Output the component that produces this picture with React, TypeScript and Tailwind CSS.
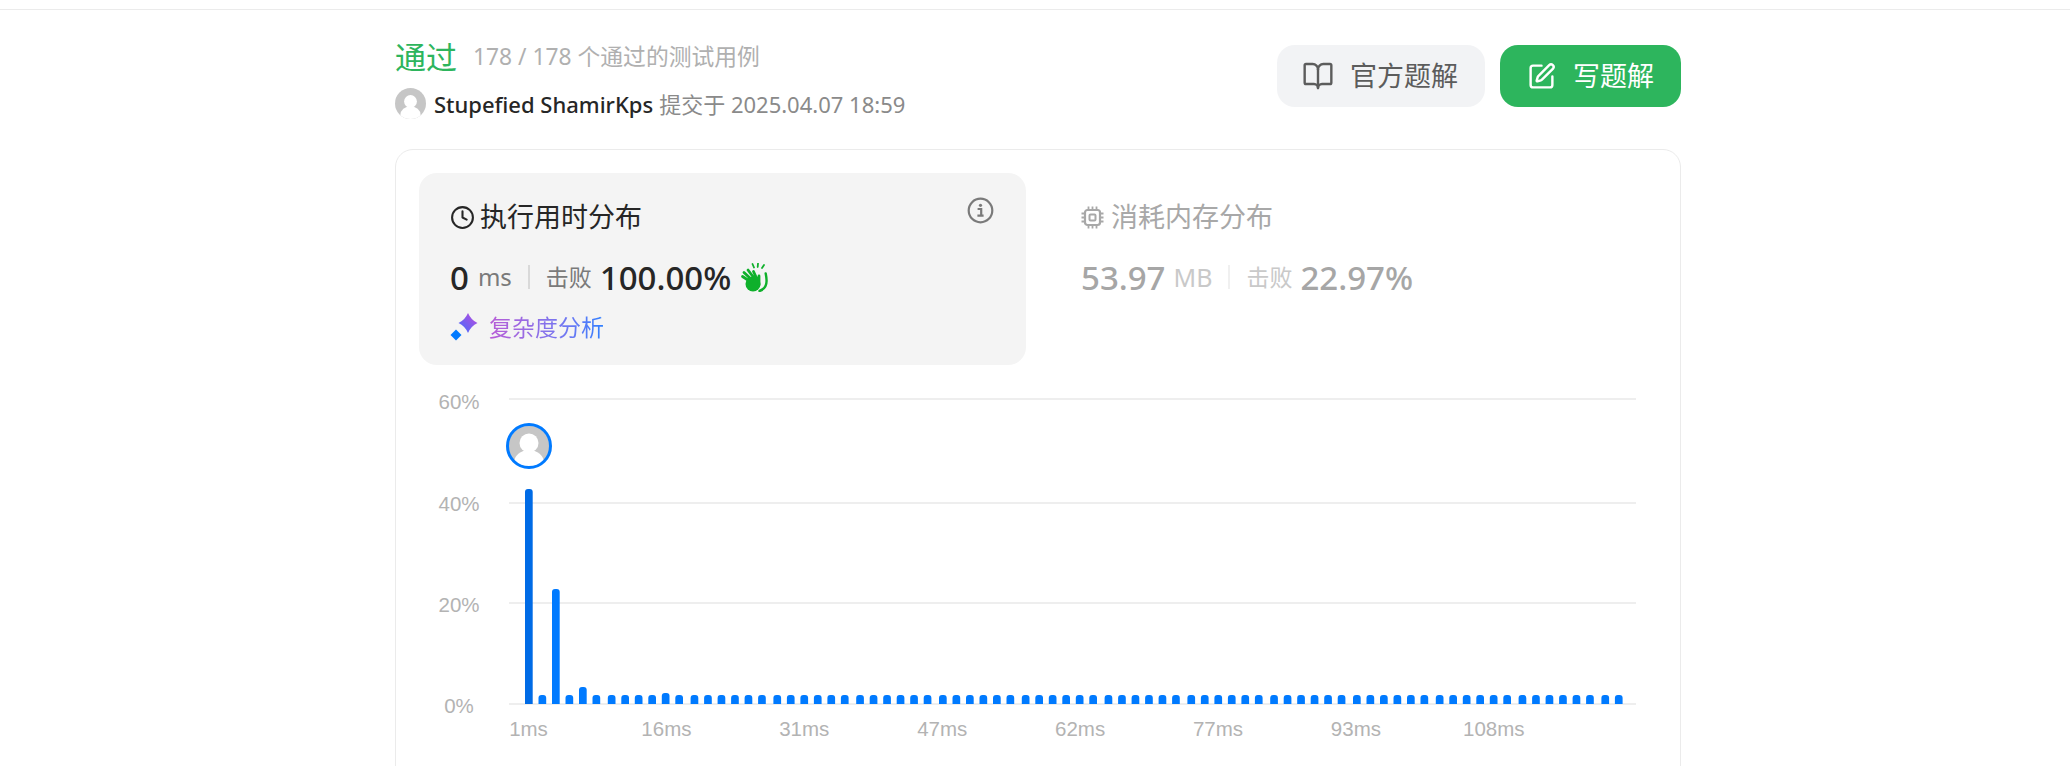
import { BookOpen, Clock, SquarePen } from "lucide-react";

const FONT = "font-['Noto_Sans','Noto_Sans_CJK_SC',sans-serif]";

// bar heights that differ from the default stub
const TALL: Record<number, number> = { 0: 215, 2: 115, 4: 17, 10: 11 };
const BAR_COUNT = 80;
const BASE_Y = 318;
const GRID_X1 = 113;
const GRID_X2 = 1240;

function barX(i: number) {
  // pitch is 13.5 with a slightly wider gap after each sixth bar
  return 129 + i * 13.5 + Math.floor(i / 6) * 1.8;
}

function barPath(x: number, h: number) {
  const w = 7.7;
  const r = 3;
  const top = BASE_Y - h;
  return `M${x} ${BASE_Y}V${top + r}A${r} ${r} 0 0 1 ${x + r} ${top}H${x + w - r}A${r} ${r} 0 0 1 ${x + w} ${top + r}V${BASE_Y}Z`;
}

function Avatar({ size, ring }: { size: number; ring?: boolean }) {
  const id = ring ? "av-ring" : "av-small";
  const r = ring ? 20.5 : 23;
  return (
    <svg width={size} height={size} viewBox="0 0 46 46" className="shrink-0">
      <defs>
        <clipPath id={id}>
          <circle cx="23" cy="23" r={r} />
        </clipPath>
      </defs>
      <circle cx="23" cy="23" r={r} fill="#c6c6c6" />
      <g clipPath={`url(#${id})`}>
        <circle cx="23" cy="20" r="9.5" fill="#fff" />
        <ellipse cx="23" cy="40" rx="15" ry="13" fill="#fff" />
      </g>
      {ring && <circle cx="23" cy="23" r="21.5" fill="none" stroke="#007aff" strokeWidth="3" />}
    </svg>
  );
}

function InfoIcon() {
  return (
    <svg width="27" height="27" viewBox="0 0 27 27" fill="none" className="shrink-0">
      <circle cx="13.5" cy="13.5" r="11.8" stroke="#7a7a7a" strokeWidth="2.2" />
      <circle cx="13.5" cy="8.3" r="1.6" fill="#7a7a7a" />
      <path d="M10.6 12h3.6v6.4M10.4 18.6h6.2" stroke="#7a7a7a" strokeWidth="2.2" />
    </svg>
  );
}

function ChipIcon() {
  return (
    <svg width="23" height="23" viewBox="0 0 23 23" fill="none" className="shrink-0">
      <rect x="4" y="4" width="15" height="15" rx="2.5" stroke="#a8a8a8" strokeWidth="2.2" />
      <rect x="8.5" y="8.5" width="6" height="6" rx="1" stroke="#a8a8a8" strokeWidth="2" />
      <path
        d="M7.5 0.5v3M11.5 0.5v3M15.5 0.5v3M7.5 19.5v3M11.5 19.5v3M15.5 19.5v3M0.5 7.5h3M0.5 11.5h3M0.5 15.5h3M19.5 7.5h3M19.5 11.5h3M19.5 15.5h3"
        stroke="#a8a8a8"
        strokeWidth="1.8"
      />
    </svg>
  );
}

function ClapIcon() {
  return (
    <svg width="28" height="29" viewBox="0 0 28 29" fill="none" className="shrink-0">
      <circle cx="13" cy="21" r="7.5" fill="#0fb02b" />
      <path
        d="M11 19L2.500 13.500M12 17L4 9.500M14 15L8 7M16.500 15L13.500 8.500M19 22V13"
        stroke="#0fb02b"
        strokeWidth="2.800"
        strokeLinecap="round"
      />
      <path d="M19.500 28c4.500-1.500 7.500-5.500 7-11.500-.1-2-.3-3.500-.8-6" stroke="#0fb02b" strokeWidth="2.400" strokeLinecap="round" />
      <path d="M12.500 1l1.500 3.500M18 .5l-.3 3.500M24 2l-2 3" stroke="#0fb02b" strokeWidth="1.800" strokeLinecap="round" />
    </svg>
  );
}

function SparkIcon() {
  return (
    <svg width="28" height="28" viewBox="0 0 28 28" className="shrink-0">
      <defs>
        <linearGradient id="spark" x1="0" y1="1" x2="1" y2="0">
          <stop offset="0" stopColor="#3f6fff" />
          <stop offset="0.7" stopColor="#9a55e6" />
          <stop offset="1" stopColor="#c055d8" />
        </linearGradient>
      </defs>
      <path d="M18 0Q21 7 27.5 10Q21 13 18 20Q15 13 8.5 10Q15 7 18 0z" fill="url(#spark)" />
      <path d="M6 16.500l5.500 5.500L6 27.500.5 22z" fill="#007aff" />
    </svg>
  );
}

function Chart() {
  const yLabels = [
    ["60%", 23],
    ["40%", 125],
    ["20%", 226],
    ["0%", 327],
  ] as const;
  const gridY = [13, 117, 217, 318];
  const xLabels = ["1ms", "16ms", "31ms", "47ms", "62ms", "77ms", "93ms", "108ms"];

  return (
    <svg width="1284" height="370" viewBox="0 0 1284 370" className="block font-['Liberation_Sans',sans-serif]">
      {gridY.map((y) => (
        <line key={y} x1={GRID_X1} x2={GRID_X2} y1={y} y2={y} stroke="#eeeeee" strokeWidth="2" />
      ))}
      {yLabels.map(([t, y]) => (
        <text key={t} x="63" y={y} textAnchor="middle" fontSize="20.5" fill="#b3b3b3">
          {t}
        </text>
      ))}
      {xLabels.map((t, i) => (
        <text key={t} x={132.5 + i * 137.9} y="350" textAnchor="middle" fontSize="20.5" fill="#b3b3b3">
          {t}
        </text>
      ))}
      {Array.from({ length: BAR_COUNT }, (_, i) => (
        <path key={i} d={barPath(barX(i), TALL[i] ?? 9)} fill={i === 0 ? "#006be6" : "#007aff"} />
      ))}
      <g transform="translate(110 37)">
        <Avatar size={46} ring />
      </g>
    </svg>
  );
}

export default function App() {
  return (
    <div className={`h-[766px] w-full overflow-hidden bg-white ${FONT}`}>
      <div className="h-[10px] border-b border-[#ebebeb]" />
      <div className="ml-[395px] w-[1286px]">
        <div className="flex h-[139px] items-start justify-between pt-[25px]">
          <div>
            <div className="flex h-[44px] items-center">
              <span className="text-[31px] leading-none text-[#2db55d]">通过</span>
              <span className="ml-4 text-[22.8px] leading-none text-[#b0b0b0]">178 / 178 个通过的测试用例</span>
            </div>
            <div className="mt-[9px] flex items-center">
              <Avatar size={31} />
              <span className="ml-2 text-[22px] leading-none font-medium text-[#262626]">Stupefied ShamirKps</span>
              <span className="ml-[6px] text-[22px] leading-none text-[#8a8a8a]">提交于 2025.04.07 18:59</span>
            </div>
          </div>
          <div className="mt-[10px] flex gap-[15px] text-[27px]">
            <button className="flex h-[62px] w-[208px] items-center justify-center gap-[16px] rounded-[18px] bg-[#f2f3f5] pr-[2px] text-[#5c5c5c]">
              <BookOpen size={32} strokeWidth={1.8} />
              官方题解
            </button>
            <button className="flex h-[62px] w-[181px] items-center justify-center gap-[17px] rounded-[18px] bg-[#2db55d] text-white">
              <SquarePen size={29} strokeWidth={2} />
              写题解
            </button>
          </div>
        </div>

        <div className="h-[640px] rounded-[18px] border border-[#ebebeb] p-[23px]">
          <div className="flex gap-6">
            <div className="h-[192px] w-[607px] rounded-[18px] bg-[#f4f4f4] pt-[24px] pr-[32px] pl-[31px]">
              <div className="flex items-start justify-between">
                <div className="mt-[4px] flex items-center gap-[5px] text-[27px] leading-[32px] text-[#262626]">
                  <Clock size={25} strokeWidth={2} />
                  执行用时分布
                </div>
                <InfoIcon />
              </div>
              <div className="mt-[26px] flex h-[36px] items-center">
                <span className="text-[33px] leading-none font-medium text-[#262626]">0</span>
                <span className="ml-[9px] text-[24px] leading-none text-[#7a7a7a]">ms</span>
                <div className="mx-[16px] h-[24px] w-[2px] bg-[#d9d9d9]" />
                <span className="text-[23px] leading-none text-[#7a7a7a]">击败</span>
                <span className="ml-[8px] text-[33px] leading-none font-medium text-[#262626]">100.00%</span>
                <span className="ml-[9px]">
                  <ClapIcon />
                </span>
              </div>
              <div className="mt-[18px] flex items-center gap-[11px]">
                <SparkIcon />
                <span className="bg-gradient-to-r from-[#b85bd6] to-[#2b80ff] bg-clip-text text-[23px] leading-none text-transparent">
                  复杂度分析
                </span>
              </div>
            </div>
            <div className="pt-[24px] pl-[31px]">
              <div className="mt-[4px] flex items-center gap-[7px] text-[27px] leading-[32px] text-[#a8a8a8]">
                <ChipIcon />
                消耗内存分布
              </div>
              <div className="mt-[26px] flex h-[36px] items-center">
                <span className="text-[33px] leading-none font-medium text-[#a6a6a6]">53.97</span>
                <span className="ml-[8px] text-[25px] leading-none text-[#c9c9c9]">MB</span>
                <div className="mx-[16px] h-[24px] w-[2px] bg-[#f0f0f0]" />
                <span className="text-[23px] leading-none text-[#c9c9c9]">击败</span>
                <span className="ml-[8px] text-[33px] leading-none font-medium text-[#a6a6a6]">22.97%</span>
              </div>
            </div>
          </div>
          <div className="mt-[21px] -ml-[23px]">
            <Chart />
          </div>
        </div>
      </div>
    </div>
  );
}
